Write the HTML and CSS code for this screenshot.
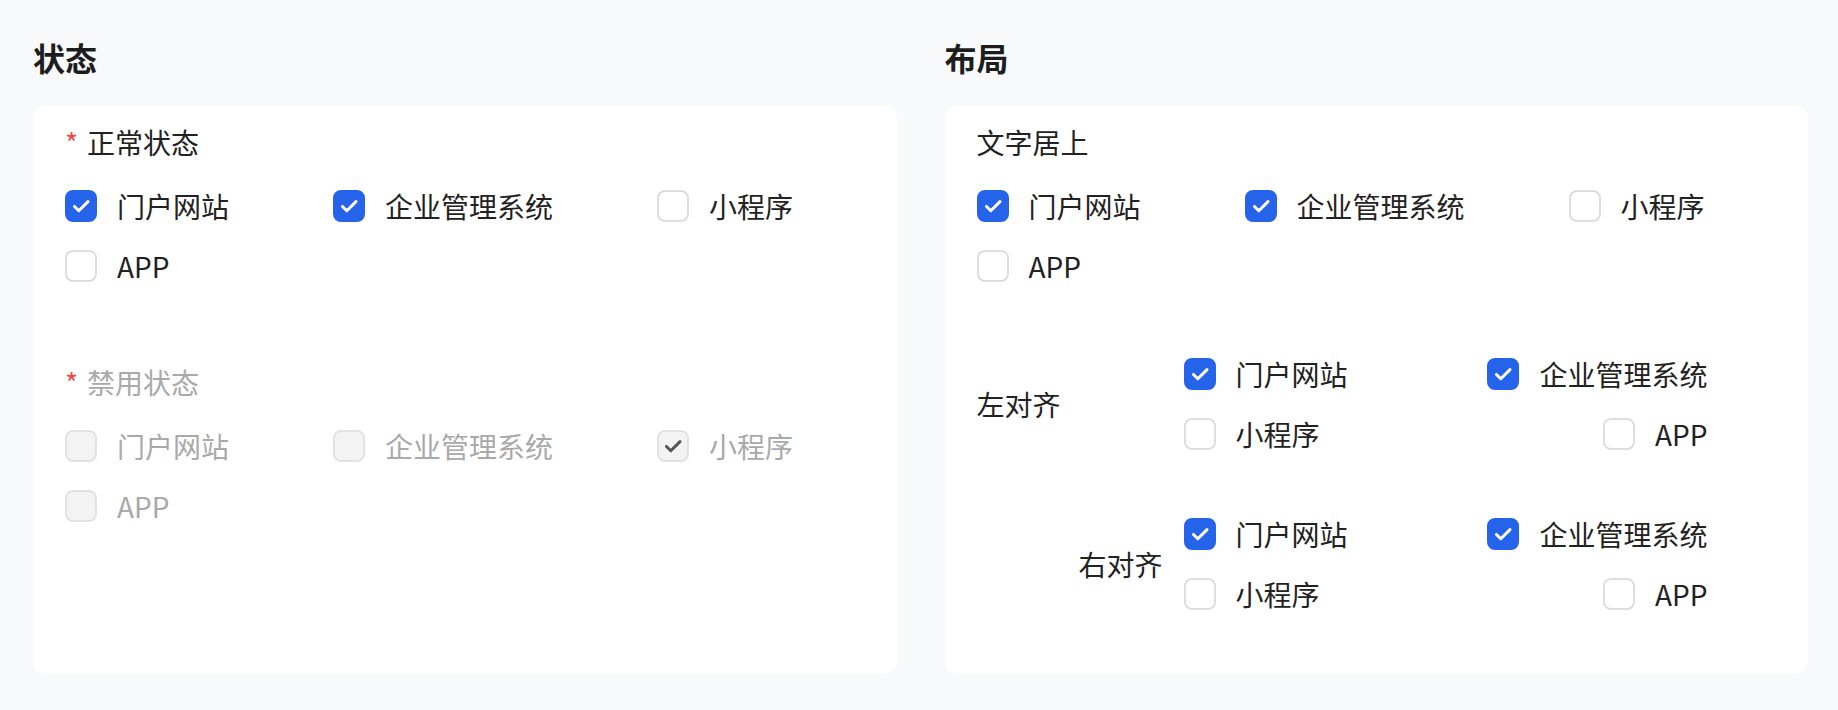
FILE: index.html
```html
<!DOCTYPE html>
<html lang="zh-CN">
<head>
    <meta charset="UTF-8">
    <meta name="viewport" content="width=device-width, initial-scale=1.0">
    <title>Checkbox</title>
    <link rel="stylesheet" href="styles.css">
</head>
<body>
    <div class="page">
        <!-- 状态 -->
        <section class="block">
            <h2 class="block-title">状态</h2>
            <div class="card">
                <div class="form-item">
                    <div class="label"><span class="required">*</span>正常状态</div>
                    <div class="group">
                        <label class="check checked"><span class="box"><svg viewBox="0 0 32 32"><path d="M8.5 16.5l5 5L24 11"/></svg></span>门户网站</label>
                        <label class="check checked"><span class="box"><svg viewBox="0 0 32 32"><path d="M8.5 16.5l5 5L24 11"/></svg></span>企业管理系统</label>
                        <label class="check"><span class="box"></span>小程序</label>
                        <label class="check"><span class="box"></span>APP</label>
                    </div>
                </div>

                <div class="form-item disabled gap-lg">
                    <div class="label"><span class="required">*</span>禁用状态</div>
                    <div class="group">
                        <label class="check"><span class="box"></span>门户网站</label>
                        <label class="check"><span class="box"></span>企业管理系统</label>
                        <label class="check checked"><span class="box"><svg viewBox="0 0 32 32"><path d="M8.5 16.5l5 5L24 11"/></svg></span>小程序</label>
                        <label class="check"><span class="box"></span>APP</label>
                    </div>
                </div>
            </div>
        </section>

        <!-- 布局 -->
        <section class="block">
            <h2 class="block-title">布局</h2>
            <div class="card">
                <div class="form-item">
                    <div class="label">文字居上</div>
                    <div class="group">
                        <label class="check checked"><span class="box"><svg viewBox="0 0 32 32"><path d="M8.5 16.5l5 5L24 11"/></svg></span>门户网站</label>
                        <label class="check checked"><span class="box"><svg viewBox="0 0 32 32"><path d="M8.5 16.5l5 5L24 11"/></svg></span>企业管理系统</label>
                        <label class="check"><span class="box"></span>小程序</label>
                        <label class="check"><span class="box"></span>APP</label>
                    </div>
                </div>

                <div class="form-item inline left">
                    <div class="label">左对齐</div>
                    <div class="grid-group">
                        <label class="check checked"><span class="box"><svg viewBox="0 0 32 32"><path d="M8.5 16.5l5 5L24 11"/></svg></span>门户网站</label>
                        <label class="check checked"><span class="box"><svg viewBox="0 0 32 32"><path d="M8.5 16.5l5 5L24 11"/></svg></span>企业管理系统</label>
                        <label class="check"><span class="box"></span>小程序</label>
                        <label class="check"><span class="box"></span>APP</label>
                    </div>
                </div>

                <div class="form-item inline right">
                    <div class="label">右对齐</div>
                    <div class="grid-group">
                        <label class="check checked"><span class="box"><svg viewBox="0 0 32 32"><path d="M8.5 16.5l5 5L24 11"/></svg></span>门户网站</label>
                        <label class="check checked"><span class="box"><svg viewBox="0 0 32 32"><path d="M8.5 16.5l5 5L24 11"/></svg></span>企业管理系统</label>
                        <label class="check"><span class="box"></span>小程序</label>
                        <label class="check"><span class="box"></span>APP</label>
                    </div>
                </div>
            </div>
        </section>
    </div>
</body>
</html>
```

FILE: styles.css
```css
* {
    box-sizing: border-box;
}

body {
    margin: 0;
    background-color: #f8f9fb;
    font-family: "Noto Sans CJK SC", "Noto Sans", sans-serif;
    color: #222;
}

.page {
    display: grid;
    grid-template-columns: 1fr 1fr;
    gap: 48px;
    padding: 35px 30px 0 33px;
}

.block-title {
    margin: 0 0 27px;
    font-size: 32px;
    line-height: 44px;
    font-weight: 700;
    color: #1d1d1d;
}

.card {
    background: #fff;
    border-radius: 12px;
    padding: 14px 32px;
    min-height: 567px;
}

/* 表单项 */
.form-item .label {
    font-size: 28px;
    line-height: 44px;
    margin-bottom: 20px;
}

.form-item.gap-lg {
    margin-top: 72px;
}

.required {
    color: #f5484a;
    margin-right: 9px;
}

.group {
    display: flex;
    flex-wrap: wrap;
    column-gap: 104px;
    row-gap: 16px;
}

/* 复选框 */
.check {
    display: flex;
    align-items: center;
    gap: 20px;
    height: 44px;
    font-size: 28px;
    white-space: nowrap;
}

.box {
    width: 32px;
    height: 32px;
    flex: none;
    border: 2px solid #dedede;
    border-radius: 8px;
    background: #fff;
    display: flex;
    align-items: center;
    justify-content: center;
}

.box svg {
    width: 32px;
    height: 32px;
    fill: none;
    stroke: #fff;
    stroke-width: 3.4;
    stroke-linecap: round;
    stroke-linejoin: round;
}

.check.checked .box {
    background: #2563eb;
    border-color: #2563eb;
}

/* 禁用 */
.disabled .label,
.disabled .check {
    color: #a9a9a9;
}

.disabled .box,
.disabled .check.checked .box {
    background: #f3f3f3;
    border-color: #e2e2e2;
}

.disabled .box svg {
    stroke: #555;
}

/* 水平布局 */
.form-item.inline {
    display: flex;
    align-items: center;
}

.form-item.inline .label {
    width: 186px;
    margin: 0 21px 0 0;
    flex: none;
}

.form-item.left {
    margin-top: 64px;
}

.form-item.right {
    margin-top: 56px;
}

.form-item.right .label {
    text-align: right;
}

.grid-group {
    display: grid;
    grid-template-columns: 260px 264px;
    row-gap: 16px;
}

.grid-group .check:nth-child(even) {
    justify-self: end;
}
```
